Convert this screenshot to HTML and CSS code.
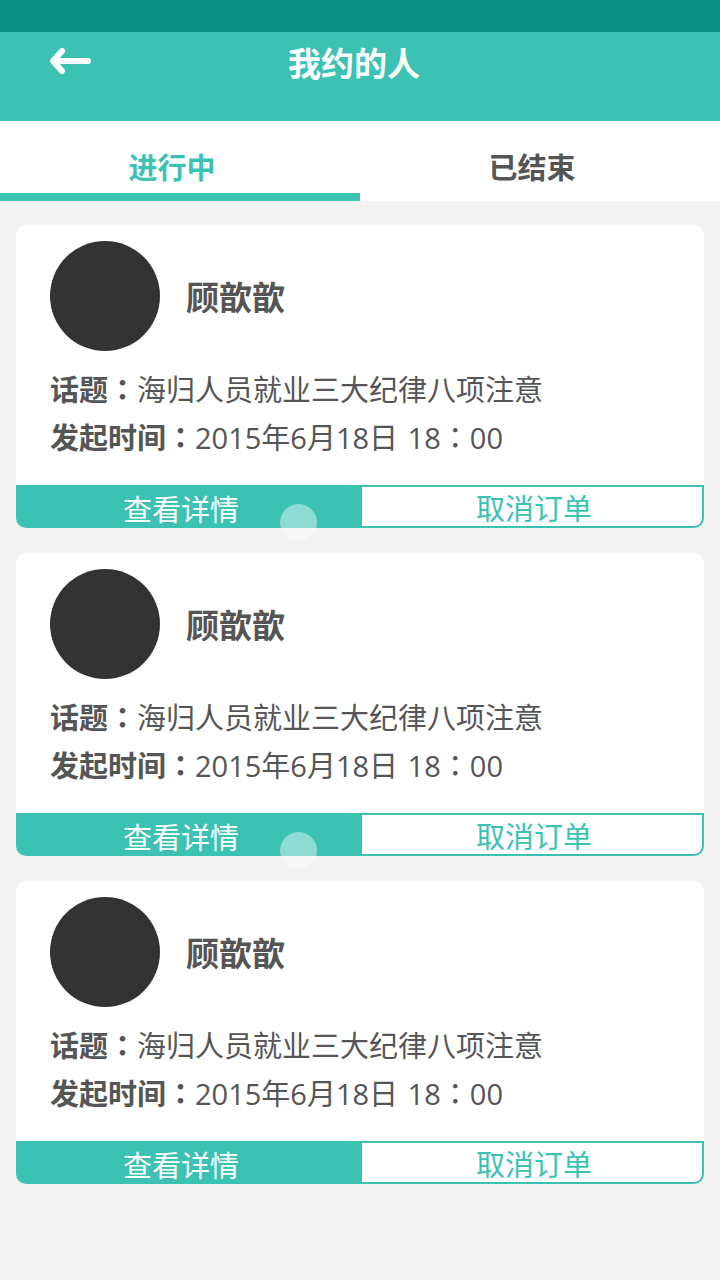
FILE: index.html
```html
<!DOCTYPE html>
<html lang="zh">
<head>
<meta charset="utf-8">
<title>我约的人</title>
<link rel="stylesheet" href="styles.css">
</head>
<body>
<div class="status"></div>
<header class="topbar">
  <span class="back"><svg width="42" height="26" viewBox="0 0 42 26"><path d="M39 13H5M13 3L4 13l9 10" fill="none" stroke="#fff" stroke-width="6" stroke-linecap="round" stroke-linejoin="round"/></svg></span>
  <h1 class="title">我约的人</h1>
</header>
<nav class="tabs">
  <div class="tab active">进行中</div>
  <div class="tab">已结束</div>
</nav>
<main class="list">
  <section class="card">
    <div class="person"><div class="avatar"></div><div class="name">顾歆歆</div></div>
    <div class="info">
      <p><b>话题<span class="colon">：</span></b>海归人员就业三大纪律八项注意</p>
      <p><b>发起时间<span class="colon">：</span></b>2015年6月18日 18<span class="colon">：</span>00</p>
    </div>
    <div class="actions"><div class="btn primary">查看详情</div><div class="btn outline">取消订单</div><span class="touch"></span></div>
  </section>
  <section class="card">
    <div class="person"><div class="avatar"></div><div class="name">顾歆歆</div></div>
    <div class="info">
      <p><b>话题<span class="colon">：</span></b>海归人员就业三大纪律八项注意</p>
      <p><b>发起时间<span class="colon">：</span></b>2015年6月18日 18<span class="colon">：</span>00</p>
    </div>
    <div class="actions"><div class="btn primary">查看详情</div><div class="btn outline">取消订单</div><span class="touch"></span></div>
  </section>
  <section class="card">
    <div class="person"><div class="avatar"></div><div class="name">顾歆歆</div></div>
    <div class="info">
      <p><b>话题<span class="colon">：</span></b>海归人员就业三大纪律八项注意</p>
      <p><b>发起时间<span class="colon">：</span></b>2015年6月18日 18<span class="colon">：</span>00</p>
    </div>
    <div class="actions"><div class="btn primary">查看详情</div><div class="btn outline">取消订单</div></div>
  </section>
</main>
</body>
</html>
```
FILE: styles.css
```css
* { box-sizing: border-box; margin: 0; padding: 0; }
html, body { background: #f2f2f2; }
body {
  width: 720px;
  min-height: 1280px;
  font-family: "Noto Sans CJK SC", "Noto Sans", sans-serif;
  color: #555;
}
.status { height: 32px; background: #0a9183; }
.topbar {
  height: 89px;
  background: #3bc2b3;
  position: relative;
  display: flex;
  justify-content: center;
  padding-top: 9px;
}
.back { position: absolute; left: 49px; top: 16px; display: block; line-height: 0; }
.title {
  color: #fff;
  font-size: 33px;
  font-weight: 700;
  line-height: 42px;
  height: 42px;
  margin-left: -12px;
}
.tabs { display: flex; height: 80px; background: #fff; }
.tab {
  width: 50%;
  text-align: center;
  font-size: 29px;
  font-weight: 700;
  color: #555;
  line-height: 42px;
  padding: 24px 16px 0 0;
  border-bottom: 8px solid transparent;
}
.tab.active { color: #3bc2b3; border-bottom-color: #3bc2b3; }
.list { padding: 24px 16px; display: flex; flex-direction: column; gap: 25px; }
.card { background: #fff; border-radius: 10px; height: 303px; display: flex; flex-direction: column; }
.person { display: flex; align-items: center; padding: 16px 0 0 34px; }
.avatar { width: 110px; height: 110px; border-radius: 50%; background: #333; }
.name { margin-left: 26px; font-size: 33px; font-weight: 700; line-height: 40px; color: #555; }
.info { padding: 15px 0 0 34px; }
.info p {
  font-family: "Open Sans", "Noto Sans CJK SC", sans-serif;
  font-size: 29px;
  line-height: 48px;
  height: 48px;
  white-space: nowrap;
  word-spacing: 2px;
}
.info b { font-weight: 700; line-height: 1; }
.colon { font-family: "Noto Sans CJK JP", "Noto Sans CJK SC", sans-serif; display: inline-block; width: 29px; text-align: center; line-height: 1; }
.actions { margin-top: auto; display: flex; height: 43px; position: relative; }
.btn { width: 50%; text-align: center; font-size: 29px; line-height: 40px; padding-top: 3px; }
.btn.primary { background: #3bc2b3; color: #fff; border-radius: 0 0 0 10px; text-indent: -14px; }
.btn.outline { border: 2px solid #3bc2b3; color: #3bc2b3; border-radius: 0 0 10px 0; line-height: 38px; padding-top: 1px; text-indent: 4px; }
.touch {
  position: absolute;
  left: 264px;
  top: 19px;
  width: 37px;
  height: 37px;
  border-radius: 50%;
  background: rgba(255, 255, 255, 0.42);
}
```
